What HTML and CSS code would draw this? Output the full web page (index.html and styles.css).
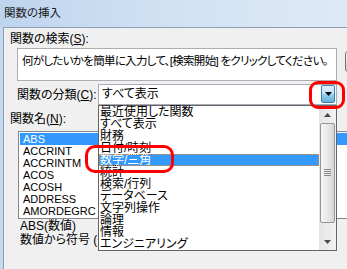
FILE: index.html
```html
<!DOCTYPE html>
<html lang="ja">
<head>
    <meta charset="UTF-8">
    <title>関数の挿入</title>
    <link rel="stylesheet" href="styles.css">
</head>
<body>

    <div class="titlebar">関数の挿入</div>

    <div class="client">
        <div class="label">関数の検索(<u>S</u>):</div>

        <div class="search-row">
            <div class="search-box">何がしたいかを簡単に入力して、[検索開始] をクリックしてください。</div>
            <span class="search-btn"></span>
        </div>

        <div class="category-row">
            <span class="category-label">関数の分類(<u>C</u>):</span>
            <div class="combo">
                <span class="combo-text">すべて表示</span>
                <span class="combo-btn">
                    <svg width="7" height="4" viewBox="0 0 7 4"><path d="M0 0H7L3.5 4Z" fill="#000"/></svg>
                </span>

                <div class="dropdown">
                    <ul class="dropdown-list">
                        <li>最近使用した関数</li>
                        <li>すべて表示</li>
                        <li>財務</li>
                        <li>日付/時刻</li>
                        <li class="selected">数学/三角</li>
                        <li>統計</li>
                        <li>検索/行列</li>
                        <li>データベース</li>
                        <li>文字列操作</li>
                        <li>論理</li>
                        <li>情報</li>
                        <li>エンジニアリング</li>
                    </ul>
                    <div class="scrollbar">
                        <div class="sb-btn">
                            <svg width="7" height="4" viewBox="0 0 7 4"><path d="M0 4H7L3.5 0Z" fill="#4a4a4a"/></svg>
                        </div>
                        <div class="sb-thumb">
                            <svg width="7" height="8" viewBox="0 0 7 8"><path d="M0 .5H7M0 2.5H7M0 4.5H7M0 6.5H7" stroke="#8a8a8a"/></svg>
                        </div>
                        <div class="sb-track"></div>
                        <div class="sb-btn">
                            <svg width="7" height="4" viewBox="0 0 7 4"><path d="M0 0H7L3.5 4Z" fill="#4a4a4a"/></svg>
                        </div>
                    </div>
                </div>
            </div>
        </div>

        <div class="label name-label">関数名(<u>N</u>):</div>
        <ul class="func-list">
            <li class="selected"><span>ABS</span></li>
            <li><span>ACCRINT</span></li>
            <li><span>ACCRINTM</span></li>
            <li><span>ACOS</span></li>
            <li><span>ACOSH</span></li>
            <li><span>ADDRESS</span></li>
            <li><span>AMORDEGRC</span></li>
        </ul>

        <div class="desc">
            <div>ABS(数値)</div>
            <div>数値から符号 (+</div>
        </div>
    </div>

    <!-- red marks drawn over the screenshot -->
    <div class="mark mark-btn"></div>
    <div class="mark mark-item"></div>

</body>
</html>
```

FILE: styles.css
```css
body {
    margin: 0;
    width: 347px;
    height: 269px;
    overflow: hidden;
    position: relative;
    background: #c5d8ee;
    font-family: "Liberation Sans", "Noto Sans CJK JP", sans-serif;
    font-size: 12px;
    font-feature-settings: "palt";
    color: #000;
}

.titlebar {
    height: 27px;
    line-height: 27px;
    padding-left: 4px;
    font-size: 11.5px;
    color: #1a1a1a;
    background: linear-gradient(to right, #bed4ee, #d3e3f4 55%, #dde9f6);
}

.client {
    margin-left: 3px;
    height: 242px;
    box-sizing: border-box;
    border-top: 1px solid #8c9fb6;
    border-left: 1px solid #8c9fb6;
    background: #f0f0f0;
    padding: 4px 0 0 6px;
    overflow: hidden;
}

.label {
    line-height: 14px;
    white-space: nowrap;
}

.search-row {
    display: flex;
    align-items: flex-start;
    margin: 2px 0 0 7px;
}

.search-box {
    flex: none;
    width: 320px;
    height: 33px;
    box-sizing: border-box;
    border: 1px solid #abadb3;
    background: #fff;
    padding: 5px 2px 5px 4px;
    font-size: 11.5px;
    line-height: 14px;
    letter-spacing: -0.7px;
    white-space: nowrap;
    overflow: hidden;
}

.search-btn {
    flex: none;
    width: 75px;
    height: 21px;
    margin: 3px 0 0 8px;
    box-sizing: border-box;
    border: 1px solid #707070;
    border-radius: 3px;
    background: linear-gradient(#f2f2f2, #ebebeb 50%, #dddddd 50%, #cfcfcf);
}

.category-row {
    display: flex;
    align-items: center;
    margin: 3px 0 0 7px;
}

.category-label {
    flex: none;
    width: 81px;
    line-height: 14px;
    white-space: nowrap;
}

.combo {
    position: relative;
    flex: none;
    display: flex;
    align-items: flex-start;
    width: 239px;
    height: 21px;
    box-sizing: border-box;
    border: 1px solid #a5acb5;
    background: #fff;
}

.combo-text {
    flex: 1;
    padding-left: 3px;
    line-height: 19px;
}

.combo-btn {
    display: flex;
    align-items: center;
    justify-content: center;
    width: 14px;
    height: 18px;
    margin-right: 1px;
    box-sizing: border-box;
    border: 1px solid #3c7fb1;
    border-radius: 2px;
    background: linear-gradient(#e3f3fc, #c2e3f5 45%, #94cdec 55%, #67b0da);
}

.dropdown {
    position: absolute;
    left: -1px;
    top: 20px;
    z-index: 2;
    display: flex;
    width: 239px;
    height: 146px;
    box-sizing: border-box;
    border: 1px solid #646464;
    background: #fff;
}

.dropdown-list {
    flex: 1;
    margin: 0;
    padding: 0;
    list-style: none;
}

.dropdown-list li {
    height: 12px;
    line-height: 12px;
    padding-left: 1px;
    white-space: nowrap;
}

.dropdown-list li.selected {
    background: #3399ff;
    color: #fff;
    outline: 1px dotted #f08a24;
    outline-offset: -1px;
}

.scrollbar {
    flex: none;
    display: flex;
    flex-direction: column;
    width: 17px;
    background: linear-gradient(to right, #e4e4e4, #f2f2f2);
}

.sb-btn {
    display: flex;
    align-items: center;
    justify-content: center;
    height: 17px;
}

.sb-thumb {
    display: flex;
    align-items: center;
    justify-content: center;
    height: 100px;
    margin: 0 1px;
    box-sizing: border-box;
    border: 1px solid #979797;
    border-radius: 2px;
    background: linear-gradient(to right, #f5f5f5, #e9e9e9 50%, #d5d5d5);
}

.sb-track {
    flex: 1;
}

.name-label {
    margin-top: 7px;
}

.func-list {
    width: 340px;
    margin: 5px 0 0 8px;
    padding: 1px;
    list-style: none;
    border: 1px solid #828790;
    background: #fff;
    font-size: 11px;
}

.func-list li {
    height: 12px;
    line-height: 12px;
    padding-left: 3px;
}

.func-list li.selected {
    background: #3399ff;
    color: #fff;
}

.desc {
    width: 78px;
    margin-left: 10px;
    line-height: 14px;
    white-space: nowrap;
}

.mark {
    position: absolute;
    box-sizing: border-box;
    border: 3px solid #ff0000;
    border-radius: 9px;
    z-index: 3;
}

.mark-btn {
    left: 309px;
    top: 81px;
    width: 36px;
    height: 28px;
}

.mark-item {
    left: 85px;
    top: 145px;
    width: 89px;
    height: 28px;
    border-radius: 10px;
}
```
